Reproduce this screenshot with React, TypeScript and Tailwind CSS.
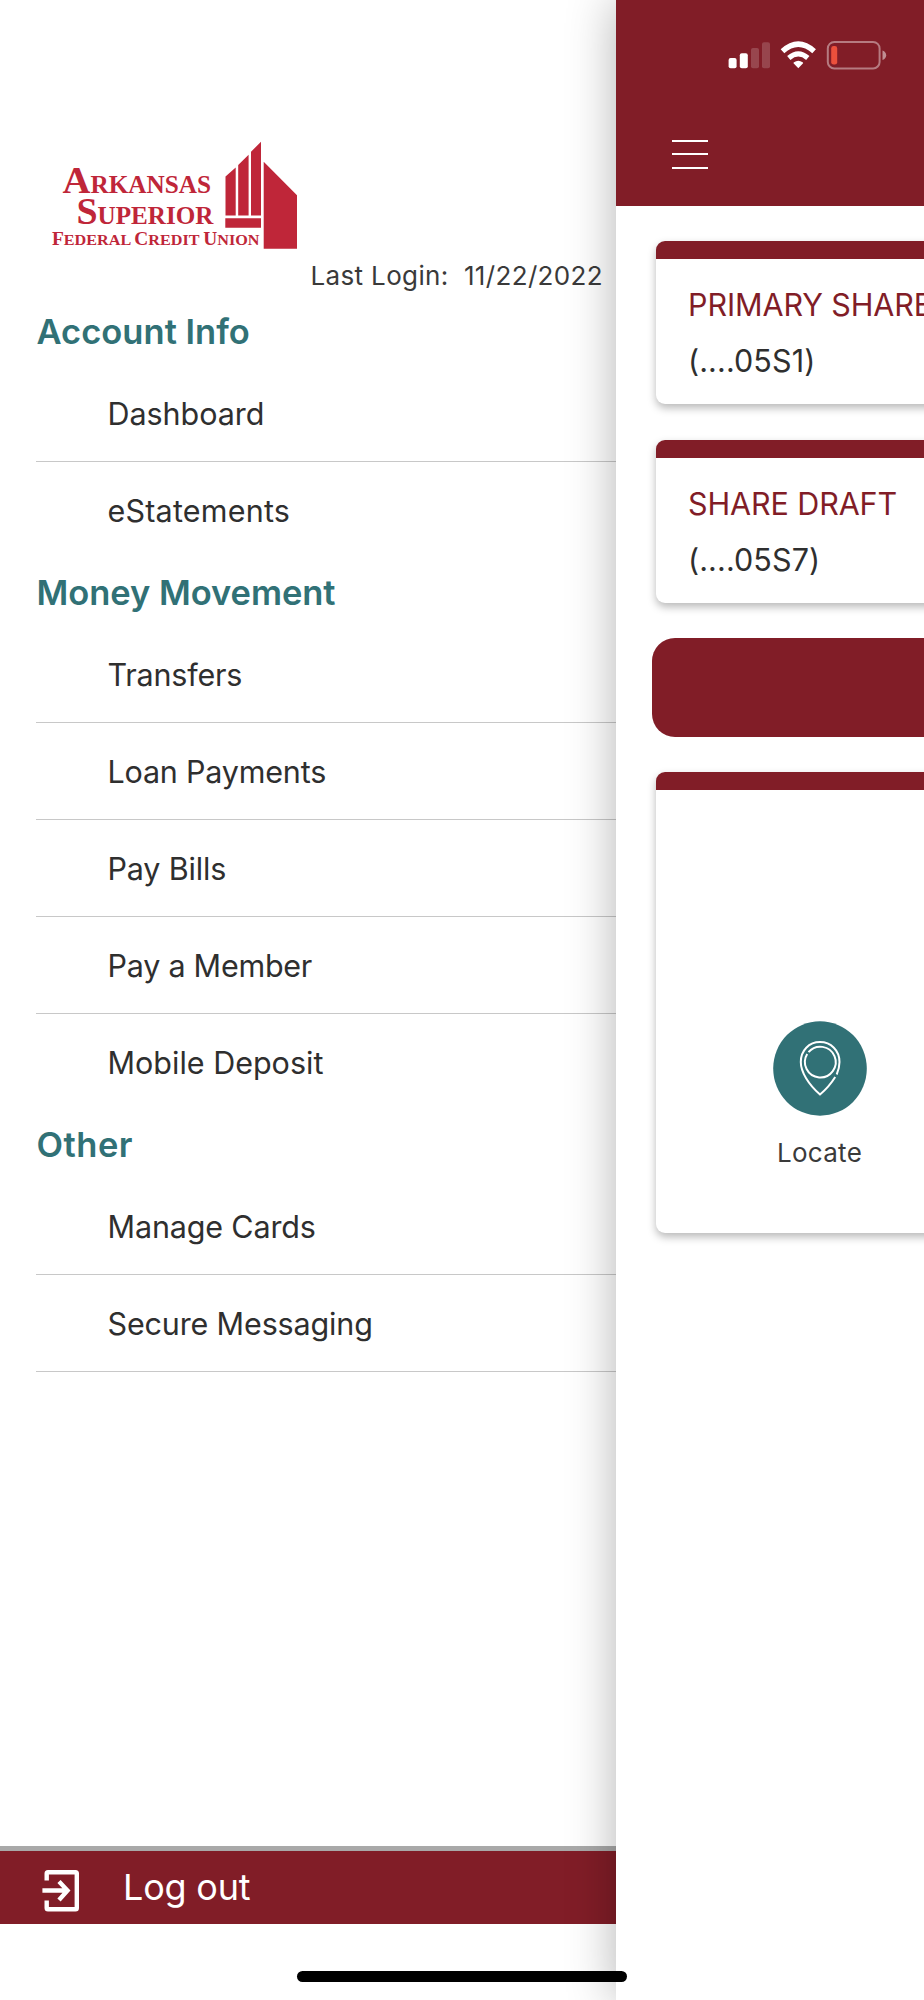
const sections = [
  {
    title: "Account Info",
    tracking: "tracking-[0.02px]",
    items: [
      { label: "Dashboard", tracking: "tracking-[-0.05px]" },
      { label: "eStatements", tracking: "tracking-[0.2px]" },
    ],
  },
  {
    title: "Money Movement",
    tracking: "tracking-[-0.05px]",
    items: [
      { label: "Transfers", tracking: "tracking-[-0.2px]" },
      { label: "Loan Payments", tracking: "tracking-[-0.2px]" },
      { label: "Pay Bills", tracking: "tracking-[-0.15px]" },
      { label: "Pay a Member", tracking: "tracking-[-0.25px]" },
      { label: "Mobile Deposit", tracking: "tracking-[0px]" },
    ],
  },
  {
    title: "Other",
    tracking: "tracking-[0.5px]",
    items: [
      { label: "Manage Cards", tracking: "tracking-[-0.15px]" },
      { label: "Secure Messaging", tracking: "tracking-[-0.15px]" },
    ],
  },
];

function Logo() {
  return (
    <svg className="ml-[50px] mt-[138px] block h-[114px] w-[250px] shrink-0" viewBox="50 138 250 114" fill="#bf2639">
      <g fontFamily="'Liberation Serif', serif" fontWeight="700">
        <text x="62.5" y="192.5" fontSize="25" textLength="148.5" lengthAdjust="spacingAndGlyphs">
          <tspan fontSize="38.5">A</tspan>RKANSAS
        </text>
        <text x="76.5" y="223.5" fontSize="25.5" textLength="137" lengthAdjust="spacingAndGlyphs">
          <tspan fontSize="38.5">S</tspan>UPERIOR
        </text>
        <text x="52" y="244.5" fontSize="15" textLength="207.5" lengthAdjust="spacingAndGlyphs">
          <tspan fontSize="18">F</tspan>EDERAL <tspan fontSize="18">C</tspan>REDIT <tspan fontSize="18">U</tspan>NION
        </text>
      </g>
      <path d="M225.5 176.5 235.7 167.5V215.5H225.5ZM238.2 165 248.6 154.7V215.5H238.2ZM251 151.7 261 141.8V215.5H251ZM225.3 218.2H261V227.7H225.3ZM263.7 161.7 297 195.3V248.8H263.7Z" />
    </svg>
  );
}

function Drawer() {
  return (
    <nav className="flex h-full w-[616px] shrink-0 flex-col bg-white">
      <Logo />
      <p className="mt-[8px] h-[38px] pr-[13px] text-right text-[26px] leading-[32px] tracking-[0.35px] whitespace-pre text-[#3a3a3a]">
        {"Last Login:  11/22/2022"}
      </p>
      {sections.map((section) => (
        <section key={section.title}>
          <h2
            className={`flex h-[67px] items-center pt-[1px] pl-[36.5px] text-[34.5px] font-semibold text-[#317176] ${section.tracking}`}
          >
            {section.title}
          </h2>
          <ul>
            {section.items.map(({ label, tracking }, i) => (
              <li
                key={label}
                className={`ml-9 flex h-[97px] items-center border-b pt-[2.5px] pl-[71.5px] text-[30.5px] text-[#2f2f2f] ${tracking} ${
                  i === section.items.length - 1 && section.title !== "Other"
                    ? "border-transparent"
                    : "border-[#c8c8c8]"
                }`}
              >
                {label}
              </li>
            ))}
          </ul>
        </section>
      ))}
      <button className="mt-auto mb-[76px] flex h-[78px] shrink-0 items-center border-t-[5px] border-[#a9a9a9] bg-[#811d27] text-left text-white">
        <svg className="mt-[6px] ml-10 h-[46px] w-[42px]" viewBox="40 1868 42 46" fill="none" stroke="white" strokeWidth="4.4">
          <path d="M46.7 1880.5V1873.5Q46.7 1872.2 48 1872.2H75.5Q76.8 1872.2 76.8 1873.5V1908Q76.8 1909.3 75.5 1909.3H48Q46.7 1909.3 46.7 1908V1900.5" />
          <path d="M42.4 1890.5H67M59 1881.5 67.5 1890.5 59 1900" />
        </svg>
        <span className="pb-[2px] pl-[41px] text-[36px] leading-[44px] tracking-[-0.2px]">Log out</span>
      </button>
    </nav>
  );
}

function StatusBar() {
  return (
    <svg className="ml-[110px] mt-[38px] block h-[34px] w-[165px]" viewBox="726 38 165 34">
      <g fill="white">
        <rect x="728.6" y="58" width="8" height="10.3" rx="2" />
        <rect x="739.8" y="53.3" width="8" height="15" rx="2" />
        <g opacity=".18">
          <rect x="751" y="48" width="8" height="20.3" rx="2" />
          <rect x="762" y="42.3" width="8" height="26" rx="2" />
        </g>
        <path d="M798.3 68.2 793.5 63.3Q793.3 62.7 794 62.3Q798.3 59 802.6 62.3Q803.3 62.7 803.1 63.3Z" />
      </g>
      <g fill="none" stroke="white">
        <path d="M782.5 51.3Q798.3 37 814.1 51.3" strokeWidth="5.4" />
        <path d="M788.8 58Q798.3 49.7 807.8 58" strokeWidth="5" />
        <rect x="827.8" y="42" width="51.8" height="26.4" rx="6.5" strokeWidth="2" opacity=".42" />
      </g>
      <rect x="831.2" y="46" width="6" height="18.6" rx="2.4" fill="#ec503c" />
      <path d="M882.5 50.5Q886.2 52 886.2 55.3Q886.2 58.6 882.5 60Z" fill="white" opacity=".5" />
    </svg>
  );
}

function ShareCard({ name, number }: { name: string; number: string }) {
  return (
    <article className="ml-10 h-[163px] rounded-[9px] bg-white shadow-[0_4px_9px_rgba(0,0,0,0.28)]">
      <div className="h-[18px] rounded-t-[9px] bg-[#811d27]" />
      <div className="pt-[18px] pl-8 text-[30.5px] leading-[56px] whitespace-nowrap">
        <h3 className="tracking-[-0.1px] text-[#811d27]">{name}</h3>
        <p className="tracking-[0.1px] text-[#2f2f2f]">{number}</p>
      </div>
    </article>
  );
}

function Dashboard() {
  return (
    <main className="h-full w-[308px] shrink-0 bg-white shadow-[0_0_46px_rgba(0,0,0,0.3)]">
      <div className="h-full overflow-hidden">
        <header className="h-[205.5px] overflow-hidden bg-[#811d27]">
          <StatusBar />
          <div className="mt-[67.5px] ml-[55.5px] flex w-9 flex-col gap-[11.5px]">
            <span className="h-[2px] bg-white" />
            <span className="h-[2px] bg-white" />
            <span className="h-[2px] bg-white" />
          </div>
        </header>
        <div className="flex w-[348px] flex-col gap-[35.5px] pt-[35.5px]">
          <ShareCard name="PRIMARY SHARE" number="(....05S1)" />
          <ShareCard name="SHARE DRAFT" number="(....05S7)" />
          <div className="ml-[35.5px] h-[98.5px] rounded-[23px] bg-[#811d27]" />
          <article className="ml-10 h-[461px] rounded-[9px] bg-white shadow-[0_4px_9px_rgba(0,0,0,0.28)]">
            <div className="h-[18px] rounded-t-[9px] bg-[#811d27]" />
            <div className="ml-[63.5px] flex w-[200px] flex-col items-center pt-[231px]">
              <svg className="h-[95px] w-[95px]" viewBox="772 1021 95 95" fill="none" stroke="white">
                <ellipse cx="820" cy="1068.5" rx="46.8" ry="47.2" fill="#317176" stroke="none" />
                <path d="M836.7 1074.5C838.6 1070 839.5 1066 839.5 1062C839.5 1050.5 831 1042 820 1042C809 1042 800.8 1050.5 800.8 1062C800.8 1072 808.5 1084.5 820 1094.5C826.5 1089 831.5 1083 835.2 1077" strokeWidth="2" />
                <path d="M808.5 1052.2A15.4 15.4 0 1 1 807.2 1054" strokeWidth="2" />
              </svg>
              <span className="mt-[21px] text-[26px] leading-8 tracking-[0.3px] text-[#3a3a3a]">Locate</span>
            </div>
          </article>
        </div>
      </div>
    </main>
  );
}

export default function App() {
  return (
    <div className="relative flex h-[2000px] w-[924px] overflow-hidden bg-white font-['Inter',sans-serif]">
      <Drawer />
      <Dashboard />
      <div className="absolute top-[1971px] left-[297px] h-[11px] w-[330px] rounded-full bg-black" />
    </div>
  );
}
